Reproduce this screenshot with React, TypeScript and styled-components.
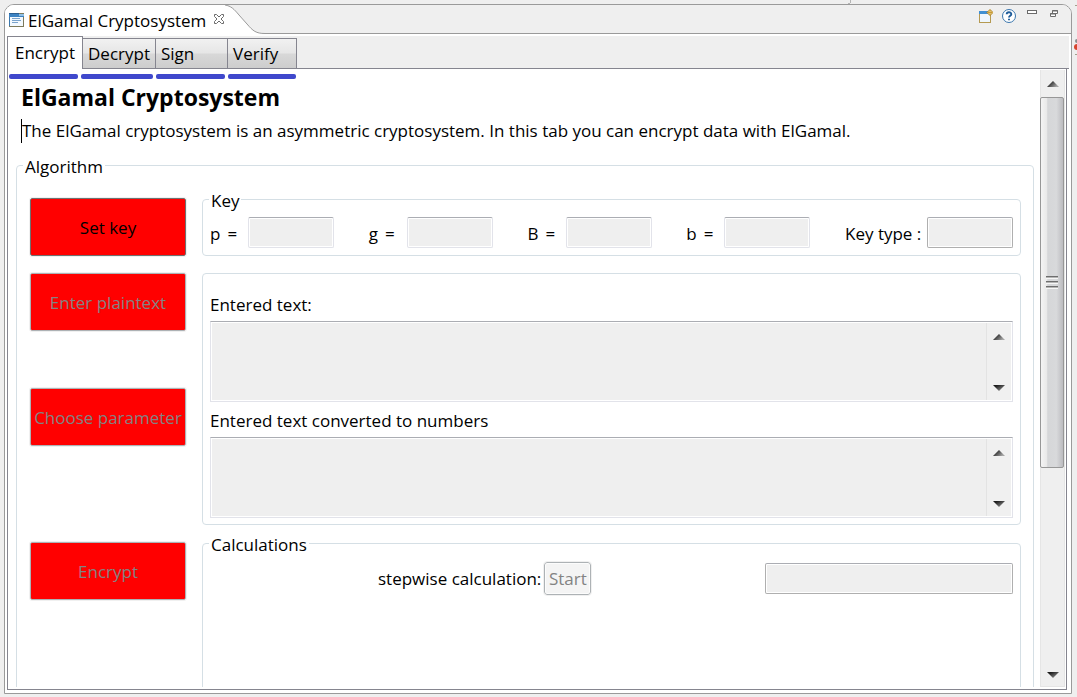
import React from 'react';
import styled, { createGlobalStyle } from 'styled-components';

const Global = createGlobalStyle`
  * { box-sizing: border-box; }
  body { margin: 0; background: #efefef; color: #000; font: 17px/24px "Open Sans", "Noto Sans", sans-serif; }
  button, input, textarea { font: inherit; }
`;

const Screen = styled.div`
  position: relative;
  display: flex;
  height: 100vh;
  padding: 4px 5px 3px 4px;
`;

/* Slivers of the neighbouring workbench views */
const NeighbourEdge = styled.svg`
  position: absolute;
  top: 0;
  right: 0;
`;

const View = styled.main`
  flex: 1;
  min-width: 0;
  display: flex;
  flex-direction: column;
  border: 1px solid #9a9a9a;
  border-radius: 10px 10px 0 0;
  background: #fff;
  overflow: hidden;
`;

const Header = styled.header`
  display: flex;
  height: 29px;
  flex: none;
  background: #efefef;
`;

const ViewTab = styled.div`
  display: flex;
  align-items: center;
  gap: 3px;
  padding: 2px 0 0 4px;
  background: #fff;
  white-space: nowrap;
`;

const ViewIcon = styled.svg`
  margin-bottom: 2px;
`;

const IconButton = styled.button`
  display: flex;
  padding: 0;
  border: 0;
  background: none;
`;

const CloseButton = styled(IconButton)`
  margin: 0 0 3px 4px;
`;

const HeaderTools = styled.div`
  flex: 1;
  display: flex;
  justify-content: flex-end;
  align-items: flex-start;
  gap: 7px;
  padding: 3px 9px 0 0;
  border-bottom: 1px solid #9a9a9a;
`;

const TabStrip = styled.nav`
  display: flex;
  align-items: flex-end;
  flex: none;
  height: 33px;
  margin: 2px 2px 0 2px;
  background: linear-gradient(#85858f, #85858f) bottom / 100% 1px no-repeat #efefef;
`;

const Tab = styled.button<{ $active?: boolean; $width: number }>`
  width: ${p => p.$width}px;
  height: ${p => (p.$active ? 33 : 31)}px;
  padding: 0 0 0 ${p => (p.$active ? 7 : 5)}px;
  border: 1px solid #85858f;
  border-left-width: ${p => (p.$active ? 1 : 0)}px;
  border-bottom-width: ${p => (p.$active ? 0 : 1)}px;
  background: ${p => (p.$active ? '#fff' : 'linear-gradient(#f1f1f1 0%, #e6e6e6 48%, #d8d8d8 52%, #cdcdcd 100%)')};
  color: #000;
  text-align: left;
  white-space: nowrap;
`;

const Pane = styled.div`
  flex: 1;
  min-height: 0;
  display: flex;
  margin: 0 4px 3px 2px;
  border: 1px solid #85858f;
  border-top: 0;
  padding: 1px 1px 2px 0;
`;

const Content = styled.div`
  flex: 1;
  min-width: 0;
  overflow: hidden;
  padding: 4px 6px 0 8px;
`;

const Marks = styled.div`
  display: flex;
  gap: 3px;
  margin-left: -7px;
`;

const Mark = styled.span<{ $width: number }>`
  width: ${p => p.$width}px;
  height: 5px;
  border-radius: 2px;
  background: #3f48cc;
`;

const Title = styled.h1`
  margin: 2px 0 6px 5px;
  font-size: 23px;
  line-height: 32px;
`;

const Intro = styled.p`
  margin: 0 0 10px 5px;
  border-left: 1px solid #000;
  white-space: nowrap;
`;

const Group = styled.fieldset`
  min-width: 0;
  margin: 0;
  padding: 6px 7px;
  border: 1px solid #d5dfe5;
  border-radius: 4px;
`;

const Legend = styled.legend`
  padding: 3px 2px 0;
  margin-left: -1px;
  line-height: 21px;
`;

const Algorithm = styled(Group)`
  padding: 10px 12px 0 13px;
  & > legend { margin-left: -7px; }
`;

const Step = styled.div<{ $gap?: number }>`
  display: grid;
  grid-template-columns: 156px minmax(0, 1fr);
  column-gap: 16px;
  margin-top: ${p => p.$gap || 0}px;
`;

const Actions = styled.div<{ $inset?: boolean }>`
  display: flex;
  flex-direction: column;
  gap: 57px;
  padding-top: ${p => (p.$inset ? 11 : 0)}px;
`;

const ActionButton = styled.button`
  height: 58px;
  padding: 2px 0 0;
  border: 1px solid #707070;
  border-radius: 2px;
  outline: 1px solid #f0f0f0;
  background: #f00;
  color: #000;
  white-space: nowrap;
  &:disabled { color: #838383; border-color: #adb2b5; }
`;

const KeyRow = styled.div`
  display: flex;
  justify-content: space-between;
`;

const Field = styled.label<{ $wide?: boolean }>`
  display: grid;
  grid-template-columns: ${p => (p.$wide ? 82 : 38)}px 86px;
  align-items: center;
  white-space: nowrap;
`;

const KeyName = styled.span`
  display: flex;
  gap: 7px;
  padding-top: 2px;
`;

const TextField = styled.input<{ $soft?: boolean }>`
  width: 100%;
  height: 31px;
  border: 1px solid ${p => (p.$soft ? '#e2e3ea' : '#afafaf')};
  border-top-color: #abadb3;
  border-radius: 2px;
  background: #efefef;
  box-shadow: inset 0 0 0 1px #fff;
`;

const TextGroup = styled(Group)`
  padding: 19px 7px 6px;
`;

const AreaLabel = styled.label`
  display: block;
  margin-bottom: 4px;
`;

const AreaBox = styled.div`
  display: flex;
  height: 81px;
  padding: 1px;
  border: 1px solid #e2e3ea;
  border-top-color: #abadb3;
  & + label { margin-top: 7px; }
`;

const Area = styled.textarea`
  flex: 1;
  min-width: 0;
  border: 0;
  padding: 2px;
  resize: none;
  overflow: hidden;
  background: #efefef;
`;

const AreaScroll = styled.div`
  display: flex;
  flex-direction: column;
  justify-content: space-between;
  align-items: center;
  width: 25px;
  padding: 11px 0 9px;
  border-left: 1px solid #e3e3e3;
  background: #f0f0f0;
`;

const Calculations = styled(Group)`
  min-height: 240px;
  padding-top: 7px;
`;

const CalcRow = styled.div`
  display: flex;
  align-items: center;
  gap: 3px;
  padding-left: 168px;
  white-space: nowrap;
`;

const StartButton = styled.button`
  width: 47px;
  height: 33px;
  padding: 0;
  border: 1px solid #adb2b5;
  border-radius: 3px;
  outline: 1px solid #f0f0f0;
  background: #f4f4f4;
  box-shadow: inset 0 0 0 1px #fcfcfc;
  color: #838383;
`;

const Result = styled.div`
  width: 248px;
  margin-left: auto;
`;

const Scrollbar = styled.div`
  display: flex;
  flex-direction: column;
  align-items: center;
  width: 25px;
  padding-bottom: 8px;
  border: solid #e5e5e5;
  border-width: 0 1px 1px;
  background: #efefef;
`;

const ScrollEnd = styled.div`
  display: flex;
  padding: 11px 0 10px;
`;

const Thumb = styled.div`
  display: flex;
  align-items: center;
  justify-content: center;
  width: 24px;
  height: 61%;
  margin-left: -1px;
  border: 1px solid #979797;
  border-radius: 2px;
  background: linear-gradient(90deg, #f4f4f4 0%, #e8e8e8 28%, #d5d6d8 30%, #d8d9db 70%, #bcbcc0 100%);
`;

const Spacer = styled.div`
  flex: 1;
`;

const Arrow = ({ down }: { down?: boolean }) => (
  <svg width="12" height="6" viewBox="0 0 12 6" aria-hidden="true">
    <defs>
      <linearGradient id={down ? 'ad' : 'au'} x2="1" y2={down ? '1' : '0.5'}>
        <stop offset="0.2" stopColor="#1c1c1c" />
        <stop offset="1" stopColor="#a5a5a5" />
      </linearGradient>
    </defs>
    <path d={down ? 'M0 0H12L6 6Z' : 'M0 6H12L6 0Z'} fill={`url(#${down ? 'ad' : 'au'})`} />
  </svg>
);

const keys = ['p', 'g', 'B', 'b'];

export default function App() {
  return (
    <Screen>
      <Global />
      <NeighbourEdge width="230" height="60" viewBox="0 0 230 60" aria-hidden="true">
        <path d="M3.500 0V3M1 3.500H3" stroke="#b5b5b5" />
        <path d="M228 5.500H230M228 54.500H230" stroke="#a3a08c" />
        <circle cx="230" cy="41" r="2" fill="#8d8d8d" />
        <circle cx="230" cy="47" r="3" fill="#d8452f" />
      </NeighbourEdge>
      <View>
        <Header>
          <ViewTab>
            <ViewIcon width="16" height="16" viewBox="0 0 16 16" aria-hidden="true">
              <rect x="0.500" y="1.500" width="14" height="13" fill="#f3f9ff" stroke="#7d7a5c" />
              <path d="M0.500 14V2" stroke="#3c78ad" />
              <path d="M0 1h10v1h5v3H0z" fill="#3c83c3" />
              <path d="M0 1h10v1H0z" fill="#2a5f93" />
              <path d="M10 2h5v2h-5z" fill="#8fc0e8" />
              <path d="M3 6.500h8M3 8.500h9M3 10.500h6" stroke="#7aa3cc" />
            </ViewIcon>
            <span>ElGamal Cryptosystem</span>
            <CloseButton aria-label="Close">
              <svg width="12" height="12" viewBox="0 0 12 12" fill="#fff" stroke="#6b6b6b">
                <path d="M1.500 1.500h2l2.500 2.500 2.500-2.500h2v2L8 6l2.500 2.500v2h-2L6 8l-2.500 2.500h-2v-2L4 6 1.500 3.500z" />
              </svg>
            </CloseButton>
          </ViewTab>
          <svg width="40" height="29" viewBox="0 0 40 29" aria-hidden="true">
            <path d="M0 0C6 1 9 4 14 10L22 19C28 26 31 28.500 40 28.500V29H0Z" fill="#fff" />
            <path d="M0 0C6 1 9 4 14 10L22 19C28 26 31 28.500 40 28.500" fill="none" stroke="#9a9a9a" />
          </svg>
          <HeaderTools>
            <IconButton aria-label="New view">
              <svg width="16" height="16" viewBox="0 0 16 16">
                <rect x="2.500" y="3.500" width="11" height="11" fill="#eef6fd" stroke="#b59a52" />
                <path d="M2 3h9v3H2z" fill="#3f8fd2" />
                <path d="M13 1.500L16 4.500L13 7.500L10 4.500Z" fill="#fbe9a8" stroke="#a87915" />
                <path d="M13 2V7M10.500 4.500H15.500" stroke="#c99a35" />
              </svg>
            </IconButton>
            <IconButton aria-label="Help">
              <svg width="16" height="16" viewBox="0 0 16 16" fill="none">
                <circle cx="9" cy="8" r="6.500" fill="#fff" stroke="#3a76ad" />
                <path d="M6.700 6.300C6.700 3.500 11.300 3.500 11.300 6.200C11.300 7.700 9 7.700 9 9.500M9 10.800V12.300" stroke="#1f5c99" strokeWidth="1.900" />
              </svg>
            </IconButton>
            <IconButton aria-label="Minimize">
              <svg width="16" height="16" viewBox="0 0 16 16">
                <rect x="4.500" y="2.500" width="9" height="3" fill="#fff" stroke="#6b6b6b" />
              </svg>
            </IconButton>
            <IconButton aria-label="Restore">
              <svg width="16" height="16" viewBox="0 0 16 16" fill="#fff" stroke="#6b6b6b">
                <path d="M6.500 2.500h5v3h-5zM6 3h6" />
                <path d="M4.500 5.500h5v3h-5zM4 6h6" />
              </svg>
            </IconButton>
          </HeaderTools>
        </Header>
        <TabStrip>
          <Tab $active $width={76}>Encrypt</Tab>
          <Tab $width={73}>Decrypt</Tab>
          <Tab $width={72}>Sign</Tab>
          <Tab $width={69}>Verify</Tab>
        </TabStrip>
        <Pane>
          <Content>
            <Marks>
              <Mark $width={69} />
              <Mark $width={72} />
              <Mark $width={69} />
              <Mark $width={68} />
            </Marks>
            <Title>ElGamal Cryptosystem</Title>
            <Intro>The ElGamal cryptosystem is an asymmetric cryptosystem. In this tab you can encrypt data with ElGamal.</Intro>
            <Algorithm>
              <Legend>Algorithm</Legend>
              <Step>
                <Actions $inset>
                  <ActionButton>Set key</ActionButton>
                </Actions>
                <Group>
                  <Legend>Key</Legend>
                  <KeyRow>
                    {keys.map(k => (
                      <Field key={k}>
                        <KeyName><span>{k}</span><span>=</span></KeyName>
                        <TextField $soft readOnly />
                      </Field>
                    ))}
                    <Field $wide>
                      <KeyName>Key type :</KeyName>
                      <TextField readOnly />
                    </Field>
                  </KeyRow>
                </Group>
              </Step>
              <Step $gap={17}>
                <Actions>
                  <ActionButton disabled>Enter plaintext</ActionButton>
                  <ActionButton disabled>Choose parameter</ActionButton>
                </Actions>
                <TextGroup>
                  <AreaLabel htmlFor="entered">Entered text:</AreaLabel>
                  <AreaBox>
                    <Area id="entered" readOnly />
                    <AreaScroll><Arrow /><Arrow down /></AreaScroll>
                  </AreaBox>
                  <AreaLabel htmlFor="numbers">Entered text converted to numbers</AreaLabel>
                  <AreaBox>
                    <Area id="numbers" readOnly />
                    <AreaScroll><Arrow /><Arrow down /></AreaScroll>
                  </AreaBox>
                </TextGroup>
              </Step>
              <Step $gap={6}>
                <Actions $inset>
                  <ActionButton disabled>Encrypt</ActionButton>
                </Actions>
                <Calculations>
                  <Legend>Calculations</Legend>
                  <CalcRow>
                    <span>stepwise calculation:</span>
                    <StartButton disabled>Start</StartButton>
                    <Result><TextField aria-label="Result" readOnly /></Result>
                  </CalcRow>
                </Calculations>
              </Step>
            </Algorithm>
          </Content>
          <Scrollbar>
            <ScrollEnd><Arrow /></ScrollEnd>
            <Thumb>
              <svg width="12" height="14" viewBox="0 0 12 14" aria-hidden="true">
                <path d="M0 1.500h12M0 6.500h12M0 11.500h12" stroke="#6e6e6e" />
                <path d="M0 2.500h12M0 7.500h12M0 12.500h12" stroke="#b5b5b5" />
                <path d="M0 3.500h12M0 8.500h12M0 13.500h12" stroke="#f6f6f6" />
              </svg>
            </Thumb>
            <Spacer />
            <Arrow down />
          </Scrollbar>
        </Pane>
      </View>
    </Screen>
  );
}
